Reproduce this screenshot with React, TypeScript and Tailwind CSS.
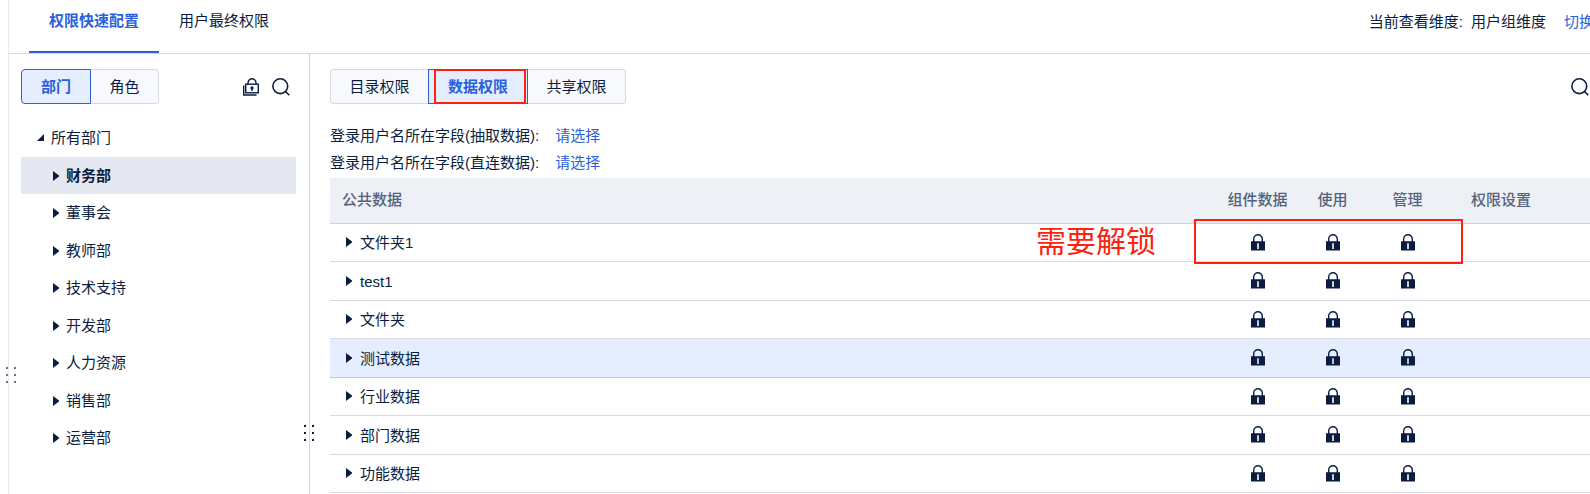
const departments = [
  "财务部",
  "董事会",
  "教师部",
  "技术支持",
  "开发部",
  "人力资源",
  "销售部",
  "运营部",
];

const folders = [
  "文件夹1",
  "test1",
  "文件夹",
  "测试数据",
  "行业数据",
  "部门数据",
  "功能数据",
];

const permissions = ["组件数据", "使用", "管理"];

function Caret() {
  return (
    <svg className="w-[6px] h-[10px] shrink-0" viewBox="0 0 6 10" fill="currentColor">
      <path d="M0 0V10L6 5.5V4.5z" />
    </svg>
  );
}

function SearchIcon() {
  return (
    <svg
      className="w-[18px] h-[18px]"
      viewBox="0 0 18 18"
      fill="none"
      stroke="currentColor"
      strokeWidth={1.6}
    >
      <circle cx="8.3" cy="8.2" r="7.4" />
      <path d="M13.5 13.5L17.3 17.2" />
    </svg>
  );
}

function BatchLockIcon() {
  return (
    <svg
      className="w-[18px] h-[18px]"
      viewBox="0 0 18 18"
      fill="none"
      stroke="currentColor"
      strokeWidth={1.4}
    >
      <rect x="3.7" y="6.2" width="12.6" height="8.6" />
      <path d="M6 6V5a4 4.2 0 0 1 8 0V6" />
      <path d="M1.7 7.5V17H14.5" />
      <circle cx="10" cy="9.9" r="1.6" fill="currentColor" stroke="none" />
      <path d="M10 10v3" />
    </svg>
  );
}

function LockIcon() {
  return (
    <svg className="w-[14px] h-[17px]" viewBox="0 0 14 17" fill="none">
      <path
        d="M2.7 8V5a4.3 4.3 0 0 1 8.6 0V8"
        stroke="currentColor"
        strokeWidth={1.4}
      />
      <path
        fillRule="evenodd"
        d="M0 7.2H14V16.5H0zM6.2 9.2V15H7.8V9.2z"
        fill="currentColor"
      />
    </svg>
  );
}

function Grip() {
  return (
    <svg className="w-[12px] h-[18px]" viewBox="0 0 12 18" fill="currentColor">
      <path d="M1 1h2v2H1zM9 1h2v2H9zM1 8h2v2H1zM9 8h2v2H9zM1 15h2v2H1zM9 15h2v2H9z" />
    </svg>
  );
}

function Header() {
  return (
    <header className="flex justify-between h-[54px] pl-5 border-b border-[#d5d8e3] whitespace-nowrap">
      <nav className="flex">
        <button className="h-[53px] px-5 pb-2.5 border-b-2 border-[#2b5fdb] text-[#2b5fdb] font-bold">
          权限快速配置
        </button>
        <button className="h-[53px] px-5 pb-3">用户最终权限</button>
      </nav>
      <div className="flex items-center pb-2.5 -mr-1">
        <span>当前查看维度:</span>
        <span className="ml-2">用户组维度</span>
        <a href="#" className="ml-[18px] text-[#2b5fdb]">
          切换
        </a>
      </div>
    </header>
  );
}

function Sidebar() {
  return (
    <aside className="relative w-[301px] shrink-0 pl-3 pr-[13px] pt-[15px] border-r border-[#d5d8e3]">
      <div className="flex items-center">
        <button className="h-[35px] w-[70px] rounded-l-sm border border-[#2b5fdb] bg-[#e5eeff] text-[#2b5fdb] font-bold">
          部门
        </button>
        <button className="h-[35px] w-[68px] rounded-r-sm border border-l-0 border-[#d5d8e3] bg-[#f7f9fd]">
          角色
        </button>
        <div className="ml-auto flex gap-3 pr-1.5">
          <button aria-label="批量锁定">
            <BatchLockIcon />
          </button>
          <button aria-label="搜索">
            <SearchIcon />
          </button>
        </div>
      </div>

      <div className="flex items-center gap-[7px] mt-[15px] mb-px h-[37px] pl-4">
        <svg className="w-[7px] h-[7px]" viewBox="0 0 7 7" fill="currentColor">
          <path d="M7 0V7H0z" />
        </svg>
        <span>所有部门</span>
      </div>
      <ul>
        {departments.map((name) => (
          <li
            key={name}
            className={
              name === "财务部"
                ? "flex items-center gap-[7px] h-[37px] even:h-[38px] pl-8 bg-[#e5e8f1] font-bold"
                : "flex items-center gap-[7px] h-[37px] even:h-[38px] pl-8"
            }
          >
            <Caret />
            <span>{name}</span>
          </li>
        ))}
      </ul>
      <div className="absolute -right-[6px] top-[370px]">
        <Grip />
      </div>
    </aside>
  );
}

function PermissionTable() {
  return (
    <div className="relative mt-0.5">
      <table className="w-full table-fixed border-collapse">
        <colgroup>
          <col />
          <col className="w-[75px]" />
          <col className="w-[75px]" />
          <col className="w-[75px]" />
          <col className="w-[145px]" />
        </colgroup>
        <thead>
          <tr className="h-[45px] bg-[#edf1f6] border-b border-[#cdd1de] text-[#56627d]">
            <th className="pl-3 text-left font-medium">公共数据</th>
            {permissions.map((name) => (
              <th key={name} className="font-medium">
                {name}
              </th>
            ))}
            <th className="pl-[26px] text-left font-medium">权限设置</th>
          </tr>
        </thead>
        <tbody>
          {folders.map((name) => (
            <tr
              key={name}
              className={
                name === "测试数据"
                  ? "h-[38px] even:h-[39px] border-b border-[#c0cbe5] bg-[#e5eeff]"
                  : "h-[38px] even:h-[39px] border-b border-[#d8dae6]"
              }
            >
              <td className="pl-4">
                <div className="flex items-center gap-2">
                  <Caret />
                  <span className="pt-0.5">{name}</span>
                </div>
              </td>
              {permissions.map((permission) => (
                <td key={permission}>
                  <button aria-label={permission} className="block mx-auto">
                    <LockIcon />
                  </button>
                </td>
              ))}
              <td></td>
            </tr>
          ))}
        </tbody>
      </table>

      {/* callout over the first row */}
      <div className="absolute top-[40px] right-[127px] flex items-center gap-[38px]">
        <span className="pt-0.5 text-[30px] leading-[44px] text-[#fe2010]">需要解锁</span>
        <div className="w-[269px] h-[45px] border-2 border-[#fe2010]"></div>
      </div>
    </div>
  );
}

function Content() {
  return (
    <main className="flex-1 min-w-0 pl-5 pt-[15px]">
      <div className="flex items-center">
        <button className="h-[35px] w-[98px] rounded-l-sm border border-r-0 border-[#d5d8e3] bg-[#f7f9fd]">
          目录权限
        </button>
        <button className="relative h-[35px] w-[100px] border border-[#2b5fdb] bg-[#e5eeff] text-[#2b5fdb] font-bold">
          数据权限
          <span className="absolute -inset-y-px left-[5px] right-px border-2 border-[#fe2010]"></span>
        </button>
        <button className="h-[35px] w-[98px] rounded-r-sm border border-l-0 border-[#d5d8e3] bg-[#f7f9fd]">
          共享权限
        </button>
        <button aria-label="搜索" className="ml-auto pr-px">
          <SearchIcon />
        </button>
      </div>

      <div className="mt-[18px]">
        <div className="flex items-center gap-4 h-[27px]">
          <span>登录用户名所在字段(抽取数据):</span>
          <a href="#" className="text-[#2b5fdb]">
            请选择
          </a>
        </div>
        <div className="flex items-center gap-4 h-[27px]">
          <span>登录用户名所在字段(直连数据):</span>
          <a href="#" className="text-[#2b5fdb]">
            请选择
          </a>
        </div>
      </div>

      <PermissionTable />
    </main>
  );
}

export default function App() {
  return (
    <div className="min-h-screen flex pl-2 overflow-hidden bg-white text-[#0a1d41] text-[15px] leading-5 font-['Liberation_Sans','Noto_Sans_CJK_SC',sans-serif]">
      <div className="relative flex-1 min-w-0 flex flex-col border-l border-[#e8eaef]">
        <Header />
        <div className="flex flex-1">
          <Sidebar />
          <Content />
        </div>
        <div className="absolute -left-[4px] top-[366px] text-[#6b7280]">
          <Grip />
        </div>
      </div>
    </div>
  );
}
